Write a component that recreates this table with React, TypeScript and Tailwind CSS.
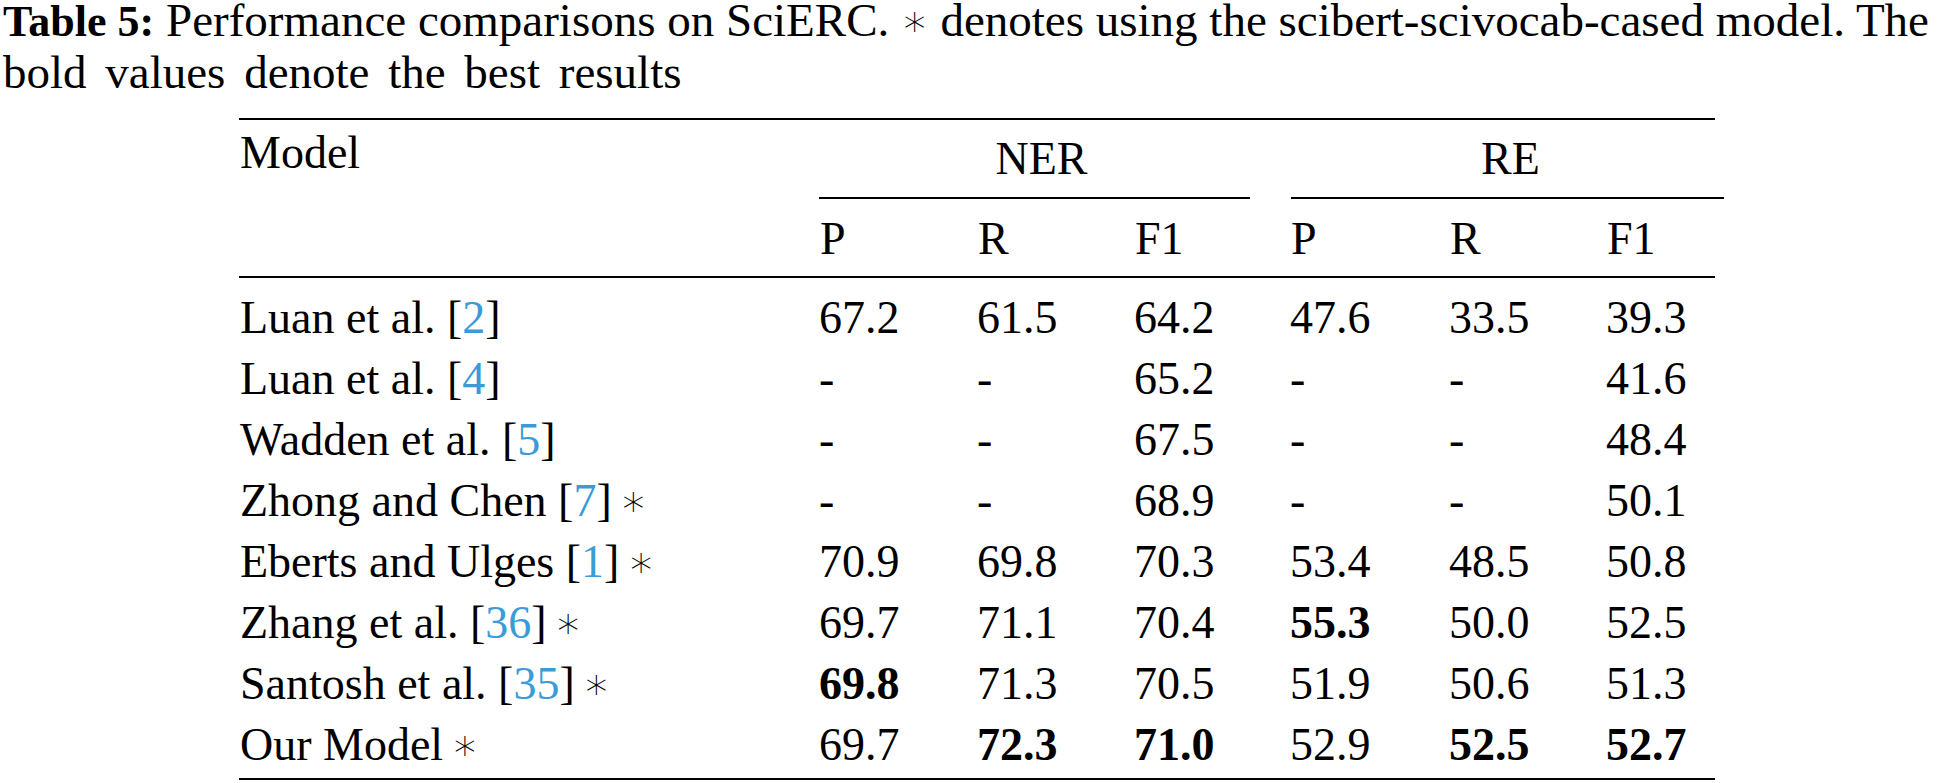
import React from "react";

type Cell = { v: string; b?: boolean };

const rows: { name: string; cite: string; star?: boolean; vals: Cell[] }[] = [
  { name: "Luan et al. [", cite: "2", vals: [{ v: "67.2" }, { v: "61.5" }, { v: "64.2" }, { v: "47.6" }, { v: "33.5" }, { v: "39.3" }] },
  { name: "Luan et al. [", cite: "4", vals: [{ v: "-" }, { v: "-" }, { v: "65.2" }, { v: "-" }, { v: "-" }, { v: "41.6" }] },
  { name: "Wadden et al. [", cite: "5", vals: [{ v: "-" }, { v: "-" }, { v: "67.5" }, { v: "-" }, { v: "-" }, { v: "48.4" }] },
  { name: "Zhong and Chen [", cite: "7", star: true, vals: [{ v: "-" }, { v: "-" }, { v: "68.9" }, { v: "-" }, { v: "-" }, { v: "50.1" }] },
  { name: "Eberts and Ulges [", cite: "1", star: true, vals: [{ v: "70.9" }, { v: "69.8" }, { v: "70.3" }, { v: "53.4" }, { v: "48.5" }, { v: "50.8" }] },
  { name: "Zhang et al. [", cite: "36", star: true, vals: [{ v: "69.7" }, { v: "71.1" }, { v: "70.4" }, { v: "55.3", b: true }, { v: "50.0" }, { v: "52.5" }] },
  { name: "Santosh et al. [", cite: "35", star: true, vals: [{ v: "69.8", b: true }, { v: "71.3" }, { v: "70.5" }, { v: "51.9" }, { v: "50.6" }, { v: "51.3" }] },
  { name: "Our Model", cite: "", star: true, vals: [{ v: "69.7" }, { v: "72.3", b: true }, { v: "71.0", b: true }, { v: "52.9" }, { v: "52.5", b: true }, { v: "52.7", b: true }] },
];

const cols = "grid grid-cols-[580px_158px_157px_156px_159px_157px_109px]";

function Ast({ cls = "" }: { cls?: string }) {
  return <span className={`font-['DejaVu_Sans',sans-serif] font-extralight text-[44px] ${cls}`}>∗</span>;
}

export default function App() {
  return (
    <div className="w-[1954px] h-[783px] bg-white text-black overflow-hidden font-['Liberation_Serif','Times_New_Roman',serif]">
      {/* caption */}
      <div className="pl-[3px] text-[47px] whitespace-nowrap">
        <div className="w-[1926px] leading-[40px] text-justify [text-align-last:justify]">
          <span className="font-bold text-[44px]">Table 5:</span> Performance comparisons on SciERC. <Ast /> denotes using the scibert-scivocab-cased model. The
        </div>
        <div className="leading-[60px] [word-spacing:7px]">bold values denote the best results</div>
      </div>

      <div className="ml-[239px] mt-[16px] w-[1476px] text-[46px] leading-[51px]">
        <div className="h-[2px] bg-black" />

        {/* header row 1 */}
        <div className={`${cols} h-[77px]`}>
          <div className="pt-[7px] pl-px">Model</div>
          <div className="col-span-3 pt-[13px] pr-[26px] text-center">NER</div>
          <div className="col-span-3 pt-[13px] pl-[16px] text-center">RE</div>
        </div>

        {/* cmidrules */}
        <div className={`${cols} h-[2px]`}>
          <div />
          <div className="col-span-3 mr-[40px] bg-black" />
          <div className="col-span-3 ml-px mr-[-9px] bg-black" />
        </div>

        {/* header row 2 */}
        <div className={`${cols} h-[77px] pt-[14px]`}>
          <div />
          {["P", "R", "F1", "P", "R", "F1"].map((h, i) => (
            <div key={i} className="pl-px">
              {h}
            </div>
          ))}
        </div>

        <div className="h-[2px] bg-black" />

        {/* body */}
        <div className="pt-[9px] pb-[3px]">
          {rows.map((r, i) => (
            <div key={i} className={`${cols} h-[61px] leading-[61px]`}>
              <div className="pl-px whitespace-nowrap">
                {r.name}
                {r.cite && <span className="text-[#3a9bd8]">{r.cite}</span>}
                {r.cite && "]"}
                {r.star && <Ast cls="ml-[8px]" />}
              </div>
              {r.vals.map((c, j) => (
                <div key={j} className={c.b ? "font-bold" : ""}>
                  {c.v}
                </div>
              ))}
            </div>
          ))}
        </div>

        <div className="h-[2px] bg-black" />
      </div>
    </div>
  );
}
